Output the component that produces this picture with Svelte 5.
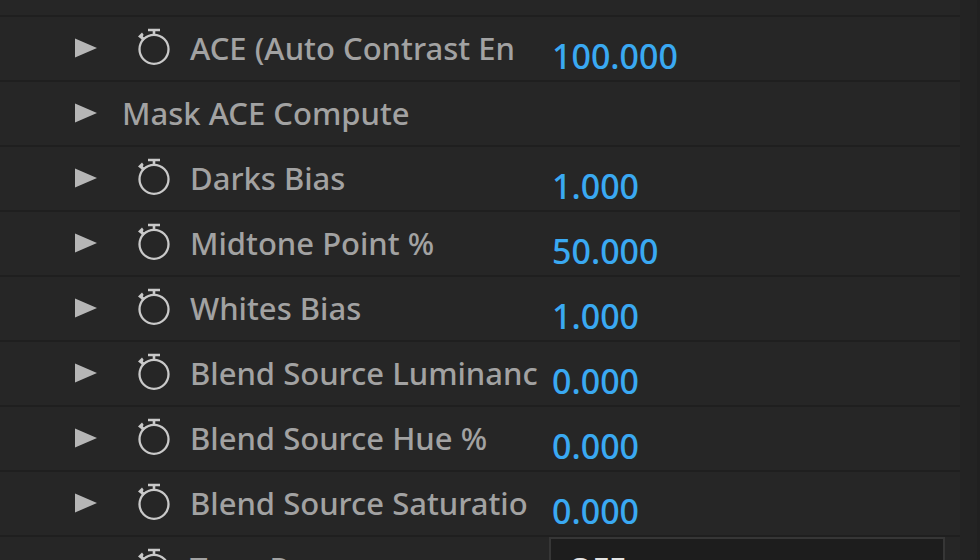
<script>

    let rows = [
        { label: 'ACE (Auto Contrast En', value: '100.000' },
        { label: 'Mask ACE Compute', group: true },
        { label: 'Darks Bias', value: '1.000' },
        { label: 'Midtone Point %', value: '50.000' },
        { label: 'Whites Bias', value: '1.000' },
        { label: 'Blend Source Luminanc', value: '0.000' },
        { label: 'Blend Source Hue %', value: '0.000' },
        { label: 'Blend Source Saturatio', value: '0.000' },
        { label: 'Tone Remap', options: ['OFF', 'ON'] }
    ]

    let selected = 'OFF'

</script>

<style>

    :global(body) {
        background: #262626;
    }

    .panel {
        display: flex;
        height: 100vh;
        overflow: hidden;
        color: #a2a2a2;
        font-family: "Noto Sans", "Open Sans", sans-serif;
        font-size: 31px;
        font-weight: 500;
        line-height: 40px;
    }

    .rows {
        flex: 1;
        min-width: 0;
        padding-top: 15px;
    }

    .gutter {
        width: 20px;
        box-sizing: border-box;
        background: #232323;
        border-right: 3px solid #202020;
    }

    .row {
        display: flex;
        height: 65px;
        box-sizing: border-box;
        border-top: 2px solid #1f1f1f;
    }

    .name {
        display: flex;
        align-items: center;
        flex: 0 0 549px;
        box-sizing: border-box;
        padding: 0 0 2px 74px;
        white-space: nowrap;
    }

    button {
        display: flex;
        margin: 0;
        padding: 0;
        border: 0;
        background: none;
    }

    .twirl {
        width: 48px;
    }

    .watch {
        width: 53px;
        margin: 0 0 2px 15px;
    }

    .value {
        width: 200px;
        height: 44px;
        margin: 17px 0 0 3px;
        padding: 0;
        border: 0;
        background: none;
        color: #3aa9f2;
        font: inherit;
        font-size: 34px;
        outline: none;
    }

    select {
        flex: 1;
        height: 62px;
        margin: 0 15px 0 0;
        padding: 0 17px;
        appearance: none;
        border: 2px solid #363636;
        border-radius: 0;
        background: #1d1d1d;
        color: #e4e4e4;
        font: inherit;
    }

</style>

<div class="panel">
    <div class="rows">
        {#each rows as row, i}
            <div class="row">
                <div class="name">
                    <div class="twirl">
                        {#if !row.options}
                            <button aria-label="Expand {row.label}">
                                <svg width="24" height="20" viewBox="0 0 24 20">
                                    <path d="M1 0.5L23 10L1 19.5Z" fill="#b6b6b6" />
                                </svg>
                            </button>
                        {/if}
                    </div>
                    {#if row.group}
                        <span>{row.label}</span>
                    {:else}
                        <button class="watch" aria-label="Animate {row.label}">
                            <svg width="34" height="38" viewBox="0 0 34 38" fill="none" stroke="#c9c9c9" stroke-width="2.3">
                                <circle cx="17" cy="21.3" r="14.5" />
                                <path d="M11 2H23M17 2.5V7" stroke-width="2.6" />
                                <path d="M1 8.6L5 4.6L6.6 6.8L5.8 8.4L8.4 10.6L5.8 13L3.6 10.4Z" fill="#c9c9c9" stroke="none" />
                            </svg>
                        </button>
                        <label for="param-{i}">{row.label}</label>
                    {/if}
                </div>
                {#if row.value}
                    <input id="param-{i}" class="value" type="text" bind:value={row.value} />
                {:else if row.options}
                    <select id="param-{i}" bind:value={selected}>
                        {#each row.options as option}
                            <option>{option}</option>
                        {/each}
                    </select>
                {/if}
            </div>
        {/each}
    </div>
    <div class="gutter"></div>
</div>
